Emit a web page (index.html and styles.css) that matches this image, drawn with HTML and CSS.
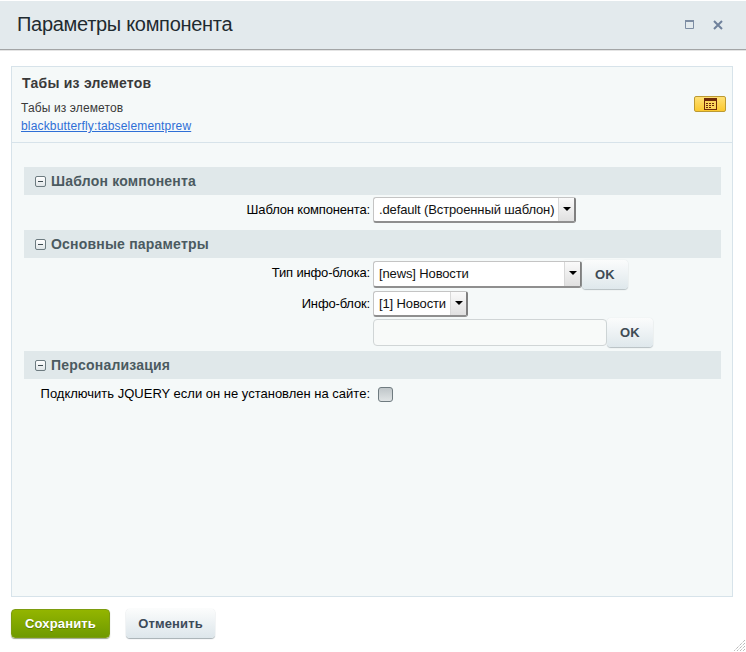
FILE: index.html
```html
<!DOCTYPE html>
<html lang="ru">
<head>
<meta charset="utf-8">
<title>Параметры компонента</title>
<link rel="stylesheet" href="styles.css">
</head>
<body>
<div class="dialog">
  <header class="head">
    <h1 class="title">Параметры компонента</h1>
    <div class="win-btns">
      <svg class="win-icon" width="10" height="10" viewBox="0 0 10 10"><path d="M.5.5h8v8h-8z" fill="none" stroke="#7d8da3"/><path d="M0 0h9v2H0z" fill="#7d8da3"/></svg>
      <svg class="win-icon" width="10" height="10" viewBox="0 0 10 10"><path d="M1 1l8 8M9 1L1 9" fill="none" stroke="#6f819b" stroke-width="2"/></svg>
    </div>
  </header>
  <main class="panel">
    <div class="info">
      <div class="info-text">
        <div class="info-title">Табы из элеметов</div>
        <div class="info-desc">Табы из элеметов</div>
        <a class="info-link" href="#">blackbutterfly:tabselementprew</a>
      </div>
      <button class="tpl-btn" type="button" aria-label="Шаблон">
        <svg width="13" height="12" viewBox="0 0 13 12" shape-rendering="crispEdges"><path d="M.5.5h12v11H.5z" fill="#fbd65c" stroke="#6f2a08"/><path d="M1 1h11v2H1z" fill="#6f2a08"/><path d="M2 5.500h9M2 7.500h9M2 9.500h6" stroke="#6f2a08" stroke-dasharray="2 1"/></svg>
      </button>
    </div>
    <div class="params">
      <div class="sec"><span class="toggle"></span>Шаблон компонента</div>
      <div class="row row-a">
        <label class="lbl lbl-short">Шаблон компонента:</label>
        <div class="ctl"><div class="sel sel-tpl"><span class="sel-text">.default (Встроенный шаблон)</span><span class="sel-arrow"></span></div></div>
      </div>
      <div class="sec"><span class="toggle"></span>Основные параметры</div>
      <div class="row row-b">
        <label class="lbl lbl-short">Тип инфо-блока:</label>
        <div class="ctl"><div class="sel sel-type"><span class="sel-text">[news] Новости</span><span class="sel-arrow"></span></div><button class="ok" type="button">OK</button></div>
      </div>
      <div class="row row-c">
        <label class="lbl lbl-short">Инфо-блок:</label>
        <div class="ctl"><div class="sel sel-block"><span class="sel-text">[1] Новости</span><span class="sel-arrow"></span></div></div>
      </div>
      <div class="row row-d">
        <span class="lbl"></span>
        <div class="ctl"><input class="inp" type="text"><button class="ok" type="button">OK</button></div>
      </div>
      <div class="sec"><span class="toggle"></span>Персонализация</div>
      <div class="row row-e">
        <label class="lbl">Подключить JQUERY если он не установлен на сайте:</label>
        <div class="ctl"><span class="check"></span></div>
      </div>
    </div>
  </main>
  <footer class="foot">
    <button class="btn btn-save" type="button">Сохранить</button>
    <button class="btn btn-cancel" type="button">Отменить</button>
    <svg class="grip" width="13" height="13" viewBox="0 0 13 13"><path d="M12 1L1 12M12 4L4 12M12 7L7 12M12 10L10 12" stroke="#9a9a9a" stroke-dasharray="1 1" fill="none"/></svg>
  </footer>
</div>
</body>
</html>
```
FILE: styles.css
```css
* { box-sizing: border-box; }
html, body { margin: 0; height: 100%; }
body { background: #fff; font-family: "Liberation Sans", Arial, sans-serif; font-size: 13px; color: #000; overflow: hidden; }
.dialog { width: 746px; height: 652px; display: flex; flex-direction: column; padding-top: 1px; position: relative; }
.head { height: 49px; background: #e3eaed; border-bottom: 1px solid #a3a5a6; box-shadow: 0 1px 0 #e4e4e4; display: flex; align-items: center; justify-content: space-between; padding: 0 23px 1px 17px; }
.title { margin: 0; font-weight: 400; font-size: 20px; color: #1f2a30; letter-spacing: -0.3px; }
.win-btns { display: flex; gap: 18px; align-items: center; }
.win-icon { display: block; }
.panel { margin: 16px 13px 0 11px; height: 531px; background: #f5f9f9; border: 1px solid #d7e3ea; display: flex; flex-direction: column; }
.info { height: 76px; border-bottom: 1px solid #d7e3ea; display: flex; justify-content: space-between; align-items: flex-start; padding: 8px 6px 0 10px; }
.info-title { font-size: 14px; font-weight: 700; color: #3a3a3a; line-height: 16px; letter-spacing: .25px; }
.info-desc { margin-top: 10px; font-size: 12px; line-height: 14px; color: #3a3a3a; letter-spacing: .12px; margin-left: -1px; }
.info-link { display: block; margin-top: 4px; font-size: 12px; line-height: 14px; text-decoration: underline; color: #2e6fd6; letter-spacing: .16px; margin-left: -1px; }
.tpl-btn { margin-top: 21px; width: 32px; height: 16px; padding: 0; border: 1px solid #bc9a32; border-radius: 2px; background: linear-gradient(#ffe075, #fbc92f); display: flex; align-items: center; justify-content: center; }
.tpl-btn svg { display: block; }
.params { padding: 24px 11px 0 12px; display: flex; flex-direction: column; }
.sec { height: 28px; background: #e0e8ea; display: flex; align-items: center; gap: 5px; padding-left: 11px; font-size: 14px; font-weight: 700; color: #4b5a60; flex: none; letter-spacing: .2px; }
.toggle { width: 11px; height: 11px; border: 1px solid #6d7b80; border-radius: 2px; background: linear-gradient(#fff, #dfe5e7); position: relative; flex: none; }
.toggle::after { content: ""; position: absolute; left: 2px; right: 2px; top: 4px; height: 1px; background: #3e4b50; }
.row { display: grid; grid-template-columns: 346px 1fr; column-gap: 3px; align-items: center; }
.row-a { height: 35px; padding-bottom: 5px; }
.row-b { height: 32px; }
.row-b .lbl { margin-bottom: 2px; }
.row-c { height: 28px; }
.row-d { height: 33px; align-items: start; }
.row-e { height: 30px; }
.lbl { text-align: right; line-height: 14px; color: #000; white-space: nowrap; }
.lbl-short { letter-spacing: -.16px; }
.ctl { display: flex; align-items: center; }
.sel { height: 26px; background: #fff; border: 1px solid #c4c4c4; border-right: 2px solid #7f7f7f; border-bottom: 2px solid #8f8f8f; border-radius: 3px; display: flex; align-items: stretch; justify-content: space-between; color: #111; }
.sel-text { padding-left: 5px; line-height: 24px; white-space: nowrap; letter-spacing: -.13px; }
.sel-arrow { width: 16px; flex: none; background: linear-gradient(#fafafa, #e0e0e0); border-left: 1px solid #d8d8d8; position: relative; }
.sel-arrow::after { content: ""; position: absolute; left: 4px; top: 9px; border: 4px solid transparent; border-top: 4px solid #000; border-bottom: 0; }
.sel-tpl { width: 203px; }
.sel-type { width: 209px; height: 27px; }
.sel-block { width: 95px; }
.ok { height: 29px; width: 46px; padding: 0; border: 0; border-radius: 4px; background: linear-gradient(#fbfcfc, #dfe8ec); box-shadow: 0 1px 1px #b6bfc3, 0 0 1px #d5dbde; font: 700 13px "Liberation Sans", Arial, sans-serif; color: #3f4c55; letter-spacing: .3px; }
.inp { width: 234px; height: 27px; padding: 0 5px; background: #f8faf9; border: 1px solid #d0d5d6; border-radius: 4px; }
.check { margin-left: 5px; width: 15px; height: 15px; border: 1px solid #6f7b80; border-radius: 3px; background: linear-gradient(#bfc6c9, #e0e4e5); }
.foot { flex: 1; display: flex; align-items: flex-start; gap: 16px; padding: 12px 0 0 11px; position: relative; }
.btn { height: 29px; padding: 0; border: 0; border-radius: 4px; font: 700 13px "Liberation Sans", Arial, sans-serif; letter-spacing: .15px; }
.btn-save { width: 99px; background: linear-gradient(#93b500, #6f9a00); color: #fff; border: 1px solid #7d9c10; box-shadow: 0 1px 1px #9aa58a; text-shadow: 0 1px 0 #5c7c00; }
.btn-cancel { width: 89px; background: linear-gradient(#fbfcfc, #dde6eb); color: #3c4a58; box-shadow: 0 1px 1px #a4adb2, 0 0 1px #d5dbde; }
.grip { position: absolute; right: 0; bottom: 0; }
```
